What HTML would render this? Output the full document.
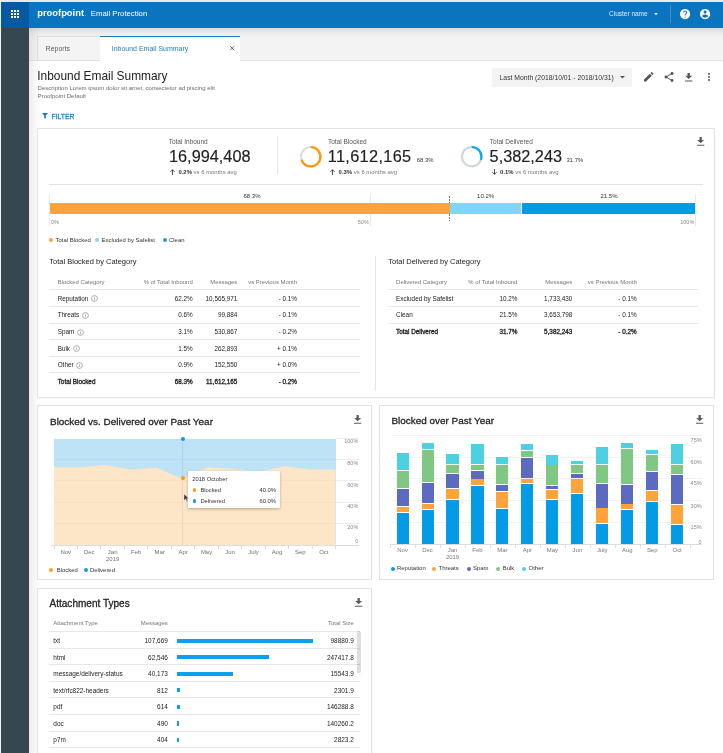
<!DOCTYPE html><html><head><meta charset="utf-8"><style>
*{margin:0;padding:0;box-sizing:border-box}
html,body{width:723px;height:753px;overflow:hidden;background:#fff}
body{position:relative;font-family:"Liberation Sans",sans-serif;}
.b{position:absolute}
.t{position:absolute;white-space:nowrap}
svg{position:absolute;overflow:visible}
</style></head><body><div id="root" style="position:absolute;left:0;top:0;width:723px;height:753px;will-change:transform"><div class="b" style="left:0px;top:0px;width:723px;height:753px;background:#ffffff;"></div>
<div class="b" style="left:0px;top:0px;width:723px;height:2px;background:#ebe9e6;"></div>
<div class="b" style="left:0px;top:0px;width:1px;height:753px;background:#f2f2f2;"></div>
<div class="b" style="left:1px;top:2px;width:722px;height:26px;background:#0a74be;"></div>
<div class="b" style="left:1px;top:2px;width:28px;height:26px;background:#0659a3;"></div>
<div class="b" style="left:11px;top:10px;width:2px;height:2px;background:#ffffff;"></div>
<div class="b" style="left:11px;top:13px;width:2px;height:2px;background:#ffffff;"></div>
<div class="b" style="left:11px;top:16px;width:2px;height:2px;background:#ffffff;"></div>
<div class="b" style="left:14px;top:10px;width:2px;height:2px;background:#ffffff;"></div>
<div class="b" style="left:14px;top:13px;width:2px;height:2px;background:#ffffff;"></div>
<div class="b" style="left:14px;top:16px;width:2px;height:2px;background:#ffffff;"></div>
<div class="b" style="left:17px;top:10px;width:2px;height:2px;background:#ffffff;"></div>
<div class="b" style="left:17px;top:13px;width:2px;height:2px;background:#ffffff;"></div>
<div class="b" style="left:17px;top:16px;width:2px;height:2px;background:#ffffff;"></div>
<div class="t" style="left:37.2px;top:3.20px;font-size:9.4px;color:#ffffff;font-weight:700;line-height:20px;letter-spacing:0px">proofpoint</div>
<div class="b" style="left:85px;top:15.3px;width:0.8px;height:0.8px;background:#6aa8da"></div>
<div class="t" style="left:90.8px;top:4.00px;font-size:7.76px;color:#ffffff;font-weight:400;line-height:20px;">Email Protection</div>
<div class="t" style="left:609px;top:3.50px;font-size:6.5px;color:#e3eef8;font-weight:400;line-height:20px;">Cluster name</div>
<svg style="left:653.8px;top:12.6px" width="4" height="2.4"><path d="M0 0 L4 0 L2 2.3 Z" fill="#d6e6f4"/></svg>
<div class="b" style="left:670px;top:5px;width:1px;height:17.6px;background:#3d8fcb;"></div>
<svg style="left:678.8px;top:7.9px" width="12.2" height="12.2" viewBox="0 0 24 24"><path fill="#fff" d="M12 2C6.48 2 2 6.48 2 12s4.48 10 10 10 10-4.48 10-10S17.52 2 12 2zm1 17h-2v-2h2v2zm2.07-7.75l-.9.92C13.45 12.9 13 13.5 13 15h-2v-.5c0-1.1.45-2.1 1.17-2.83l1.24-1.26c.37-.36.59-.86.59-1.41 0-1.1-.9-2-2-2s-2 .9-2 2H8c0-2.21 1.79-4 4-4s4 1.79 4 4c0 .88-.36 1.68-.93 2.25z"/></svg>
<svg style="left:698.8px;top:7.9px" width="12.2" height="12.2" viewBox="0 0 24 24"><path fill="#fff" d="M12 2C6.48 2 2 6.48 2 12s4.48 10 10 10 10-4.48 10-10S17.52 2 12 2zm0 3c1.66 0 3 1.34 3 3s-1.34 3-3 3-3-1.34-3-3 1.34-3 3-3zm0 14.2c-2.5 0-4.71-1.28-6-3.22.03-1.99 4-3.08 6-3.08 1.99 0 5.97 1.09 6 3.08-1.29 1.94-3.5 3.22-6 3.22z"/></svg>
<div class="b" style="left:1px;top:28px;width:28px;height:725px;background:#37474f;"></div>
<div class="b" style="left:29px;top:28px;width:694px;height:32px;background:#f3f3f3;"></div>
<div class="b" style="left:29px;top:28px;width:694px;height:10px;background:linear-gradient(to bottom, rgba(0,0,0,0.10), rgba(0,0,0,0.035) 45%, rgba(0,0,0,0));"></div>
<div class="b" style="left:29px;top:60px;width:8px;height:1px;background:#e4e4e4;"></div>
<div class="b" style="left:240px;top:60px;width:483px;height:1px;background:#e4e4e4;"></div>
<div class="b" style="left:37px;top:36px;width:63px;height:25px;background:#f4f4f4;border:1px solid #dedede;border-right:none"></div>
<div class="t" style="left:45.6px;top:38.80px;font-size:7px;color:#5f5f5f;font-weight:400;line-height:20px;">Reports</div>
<div class="b" style="left:100px;top:36px;width:140px;height:25px;background:#ffffff;border-top:1.5px solid #1a7bc4"></div>
<div class="t" style="left:111.7px;top:38.80px;font-size:7px;color:#1f7cc2;font-weight:400;line-height:20px;">Inbound Email Summary</div>
<svg style="left:229.9px;top:45.9px" width="4.4" height="4.4"><path d="M0.2 0.2 L4.2 4.2 M4.2 0.2 L0.2 4.2" stroke="#5a5a5a" stroke-width="0.85"/></svg>
<div class="b" style="left:29px;top:28px;width:13px;height:725px;background:linear-gradient(to right, rgba(0,0,0,0.075), rgba(0,0,0,0.02) 60%, rgba(0,0,0,0));"></div>
<div class="t" style="left:37.3px;top:66.40px;font-size:11.9px;color:#212121;font-weight:400;line-height:20px;">Inbound Email Summary</div>
<div class="t" style="left:37.6px;top:77.90px;font-size:6.04px;color:#6b6b6b;font-weight:400;line-height:20px;">Description Lorem ipsum dolor sit amet, consectetur ad piscing elit</div>
<div class="t" style="left:37.6px;top:85.80px;font-size:6.04px;color:#6b6b6b;font-weight:400;line-height:20px;">Proofpoint Default</div>
<svg style="left:42px;top:112.9px" width="6" height="5.8" viewBox="0 0 6 5.8"><path d="M0 0 H6 L3.8 2.6 V5.8 L2.2 5.0 V2.6 Z" fill="#1a76c0"/></svg>
<div class="t" style="left:51.6px;top:106.50px;font-size:6.75px;color:#2a83c6;font-weight:400;line-height:20px;-webkit-text-stroke:0.3px #2a83c6">FILTER</div>
<div class="b" style="left:492px;top:68px;width:140px;height:19px;background:#f3f3f3;"></div>
<div class="t" style="left:499.6px;top:67.80px;font-size:6.8px;color:#333;font-weight:400;line-height:20px;">Last Month (2018/10/01 - 2018/10/31)</div>
<svg style="left:619.5px;top:75.8px" width="5" height="3"><path d="M0 0 L5 0 L2.5 2.6 Z" fill="#555"/></svg>
<svg style="left:643.8px;top:72.4px" width="9.5" height="9.5" viewBox="3 3 18 18"><path fill="#555" d="M3 17.25V21h3.75L17.81 9.94l-3.75-3.75L3 17.25zM20.71 7.04c.39-.39.39-1.02 0-1.41l-2.34-2.34c-.39-.39-1.02-.39-1.41 0l-1.83 1.83 3.75 3.75 1.83-1.83z"/></svg>
<svg style="left:663.9px;top:72.4px" width="10" height="10" viewBox="3 2 18 20"><path fill="#555" d="M18 16.08c-.76 0-1.44.3-1.96.77L8.91 12.7c.05-.23.09-.46.09-.7s-.04-.47-.09-.7l7.05-4.11c.54.5 1.25.81 2.04.81 1.66 0 3-1.34 3-3s-1.34-3-3-3-3 1.34-3 3c0 .24.04.47.09.7L8.04 9.81C7.5 9.31 6.79 9 6 9c-1.66 0-3 1.34-3 3s1.34 3 3 3c.79 0 1.5-.31 2.04-.81l7.12 4.16c-.05.21-.08.43-.08.65 0 1.61 1.31 2.92 2.92 2.92 1.61 0 2.92-1.31 2.92-2.92s-1.31-2.92-2.92-2.92z"/></svg>
<svg style="left:685.0px;top:72.8px" width="7.4" height="8.5" viewBox="0 0 7.3 8.8" preserveAspectRatio="none"><path fill="#555" d="M2.5 0 H4.8 V2.9 H7.1 L3.65 6.2 L0.2 2.9 H2.5 Z M0 7.7 H7.3 V8.8 H0 Z"/></svg>
<div class="b" style="left:707.8px;top:73.0px;width:2.0px;height:2.0px;background:#555;border-radius:50%"></div>
<div class="b" style="left:707.8px;top:76.2px;width:2.0px;height:2.0px;background:#555;border-radius:50%"></div>
<div class="b" style="left:707.8px;top:79.4px;width:2.0px;height:2.0px;background:#555;border-radius:50%"></div>
<div class="b" style="left:37px;top:128px;width:678px;height:270px;border:1px solid #e2e2e2;box-shadow:0 0 1px rgba(0,0,0,0.06);background:#fff"></div>
<svg style="left:697.0px;top:137.2px" width="7.3" height="8.8" viewBox="0 0 7.3 8.8" preserveAspectRatio="none"><path fill="#5a5a5a" d="M2.5 0 H4.8 V2.9 H7.1 L3.65 6.2 L0.2 2.9 H2.5 Z M0 7.7 H7.3 V8.8 H0 Z"/></svg>
<div class="t" style="left:168.7px;top:131.50px;font-size:6.5px;color:#555;font-weight:400;line-height:20px;">Total Inbound</div>
<div class="t" style="left:169.0px;top:146.20px;font-size:16.3px;color:#212121;font-weight:400;line-height:20px;-webkit-text-stroke:0.15px #212121">16,994,408</div>
<svg style="left:169.8px;top:169px" width="5" height="6"><path d="M2.5 6 V0.7 M0.4 2.8 L2.5 0.7 L4.6 2.8" fill="none" stroke="#333" stroke-width="0.85"/></svg>
<div class="t" style="left:178.4px;top:162px;line-height:20px;font-size:5.95px;color:#777"><b style="color:#333">0.2%</b> vs 6 months avg</div>
<div class="b" style="left:276.5px;top:136px;width:1.0px;height:38px;background:#e6e6e6;"></div>
<svg style="left:299.1px;top:145.3px" width="23.4" height="23.4"><circle cx="11.7" cy="11.7" r="9.7" fill="none" stroke="#d9e2e7" stroke-width="2.2"/><circle cx="11.7" cy="11.7" r="9.7" fill="none" stroke="#ff9800" stroke-width="2.2" stroke-dasharray="42.36 60.95" transform="rotate(-90 11.7 11.7)"/></svg>
<div class="t" style="left:328px;top:131.50px;font-size:6.5px;color:#555;font-weight:400;line-height:20px;">Total Blocked</div>
<div class="t" style="left:327.7px;top:146.20px;font-size:16.3px;color:#212121;font-weight:400;line-height:20px;letter-spacing:0.35px;-webkit-text-stroke:0.15px #212121">11,612,165</div>
<div class="t" style="left:416.8px;top:150.00px;font-size:5.9px;color:#333;font-weight:400;line-height:20px;">68.3%</div>
<svg style="left:330px;top:169px" width="5" height="6"><path d="M2.5 6 V0.7 M0.4 2.8 L2.5 0.7 L4.6 2.8" fill="none" stroke="#333" stroke-width="0.85"/></svg>
<div class="t" style="left:338.6px;top:162px;line-height:20px;font-size:5.95px;color:#777"><b style="color:#333">0.3%</b> vs 6 months avg</div>
<svg style="left:460.2px;top:145.20000000000002px" width="23.4" height="23.4"><circle cx="11.7" cy="11.7" r="9.7" fill="none" stroke="#cfd8dc" stroke-width="2.2"/><circle cx="11.7" cy="11.7" r="9.7" fill="none" stroke="#03a9f4" stroke-width="2.2" stroke-dasharray="18.28 60.95" transform="rotate(-90 11.7 11.7)"/></svg>
<div class="t" style="left:489.8px;top:131.50px;font-size:6.5px;color:#555;font-weight:400;line-height:20px;">Total Delivered</div>
<div class="t" style="left:489.6px;top:146.20px;font-size:16.3px;color:#212121;font-weight:400;line-height:20px;-webkit-text-stroke:0.15px #212121">5,382,243</div>
<div class="t" style="left:566.6px;top:150.00px;font-size:5.9px;color:#333;font-weight:400;line-height:20px;">31.7%</div>
<svg style="left:491.5px;top:169px" width="5" height="6"><path d="M2.5 0 V5.3 M0.4 3.2 L2.5 5.3 L4.6 3.2" fill="none" stroke="#333" stroke-width="0.85"/></svg>
<div class="t" style="left:500.1px;top:162px;line-height:20px;font-size:5.95px;color:#777"><b style="color:#333">0.1%</b> vs 6 months avg</div>
<div class="b" style="left:49px;top:184px;width:654px;height:1px;background:#e3e3e3;"></div>
<div class="b" style="left:49.0px;top:195px;width:1.0px;height:30.5px;background:#e8e8e8;"></div>
<div class="b" style="left:369.9px;top:195px;width:1.0px;height:30.5px;background:#e8e8e8;"></div>
<div class="b" style="left:695.0px;top:195px;width:1.0px;height:30.5px;background:#e8e8e8;"></div>
<div class="b" style="left:449px;top:196px;width:1px;height:26.5px;background:repeating-linear-gradient(to bottom,#777 0,#777 1.5px,transparent 1.5px,transparent 3px)"></div>
<div class="b" style="left:49.5px;top:202.7px;width:400.0px;height:11.800000000000011px;background:#fca23b;"></div>
<div class="b" style="left:449.5px;top:202.7px;width:71.20000000000005px;height:11.800000000000011px;background:#81d4fa;"></div>
<div class="b" style="left:521.7px;top:202.7px;width:173.79999999999995px;height:11.800000000000011px;background:#039be5;"></div>
<div class="t" style="left:252px;transform:translateX(-50%);top:186.40px;font-size:6px;color:#333;font-weight:400;line-height:20px;">68.3%</div>
<div class="t" style="left:485.6px;transform:translateX(-50%);top:186.40px;font-size:6px;color:#333;font-weight:400;line-height:20px;">10.2%</div>
<div class="t" style="left:609px;transform:translateX(-50%);top:186.40px;font-size:6px;color:#333;font-weight:400;line-height:20px;">21.5%</div>
<div class="t" style="left:51px;top:211.70px;font-size:5.5px;color:#888;font-weight:400;line-height:20px;">0%</div>
<div class="t" style="right:354.2px;top:211.70px;font-size:5.5px;color:#888;font-weight:400;line-height:20px;">50%</div>
<div class="t" style="right:28.700000000000045px;top:211.70px;font-size:5.5px;color:#888;font-weight:400;line-height:20px;">100%</div>
<div class="b" style="left:49px;top:237.8px;width:4px;height:4px;border-radius:50%;background:#fca23b"></div>
<div class="t" style="left:55.6px;top:230.00px;font-size:5.95px;color:#333;font-weight:400;line-height:20px;">Total Blocked</div>
<div class="b" style="left:95px;top:237.8px;width:4px;height:4px;border-radius:50%;background:#81d4fa"></div>
<div class="t" style="left:101.5px;top:230.00px;font-size:5.95px;color:#333;font-weight:400;line-height:20px;">Excluded by Safelist</div>
<div class="b" style="left:162.5px;top:237.6px;width:4px;height:4px;border-radius:50%;background:#1a9be6"></div>
<div class="t" style="left:169px;top:230.00px;font-size:5.95px;color:#333;font-weight:400;line-height:20px;">Clean</div>
<div class="b" style="left:375px;top:256px;width:1px;height:134.60000000000002px;background:#e6e6e6;"></div>
<div class="t" style="left:49.3px;top:251.60px;font-size:7.5px;color:#212121;font-weight:400;line-height:20px;">Total Blocked by Category</div>
<div class="t" style="left:57.7px;top:272.00px;font-size:5.95px;color:#757575;font-weight:400;line-height:20px;">Blocked Category</div>
<div class="t" style="right:530.3px;top:272.00px;font-size:5.95px;color:#757575;font-weight:400;line-height:20px;">% of Total Inbound</div>
<div class="t" style="right:485.7px;top:272.00px;font-size:5.95px;color:#757575;font-weight:400;line-height:20px;">Messages</div>
<div class="t" style="right:426.0px;top:272.00px;font-size:5.95px;color:#757575;font-weight:400;line-height:20px;">vs Previous Month</div>
<div class="b" style="left:49px;top:289px;width:311px;height:1px;background:#e8e8e8;"></div>
<div class="t" style="left:57.7px;top:288.70px;font-size:6.35px;color:#212121;font-weight:400;line-height:20px;">Reputation<svg style="position:relative;display:inline-block;vertical-align:-1.6px;margin-left:2.7px" width="7" height="7" viewBox="0 0 7 7"><circle cx="3.5" cy="3.5" r="2.95" fill="none" stroke="#858585" stroke-width="0.65"/><rect x="3.18" y="2.9" width="0.64" height="2.2" fill="#858585"/><rect x="3.18" y="1.8" width="0.64" height="0.64" fill="#858585"/></svg></div>
<div class="t" style="right:530.3px;top:288.70px;font-size:6.35px;color:#212121;font-weight:400;line-height:20px;">62.2%</div>
<div class="t" style="right:485.7px;top:288.70px;font-size:6.35px;color:#212121;font-weight:400;line-height:20px;">10,565,971</div>
<div class="t" style="right:426.0px;top:288.70px;font-size:6.35px;color:#212121;font-weight:400;line-height:20px;">- 0.1%</div>
<div class="b" style="left:49px;top:306px;width:311px;height:1px;background:#e8e8e8;"></div>
<div class="t" style="left:57.7px;top:305.40px;font-size:6.35px;color:#212121;font-weight:400;line-height:20px;">Threats<svg style="position:relative;display:inline-block;vertical-align:-1.6px;margin-left:2.7px" width="7" height="7" viewBox="0 0 7 7"><circle cx="3.5" cy="3.5" r="2.95" fill="none" stroke="#858585" stroke-width="0.65"/><rect x="3.18" y="2.9" width="0.64" height="2.2" fill="#858585"/><rect x="3.18" y="1.8" width="0.64" height="0.64" fill="#858585"/></svg></div>
<div class="t" style="right:530.3px;top:305.40px;font-size:6.35px;color:#212121;font-weight:400;line-height:20px;">0.6%</div>
<div class="t" style="right:485.7px;top:305.40px;font-size:6.35px;color:#212121;font-weight:400;line-height:20px;">99,884</div>
<div class="t" style="right:426.0px;top:305.40px;font-size:6.35px;color:#212121;font-weight:400;line-height:20px;">- 0.1%</div>
<div class="b" style="left:49px;top:323px;width:311px;height:1px;background:#e8e8e8;"></div>
<div class="t" style="left:57.7px;top:322.00px;font-size:6.35px;color:#212121;font-weight:400;line-height:20px;">Spam<svg style="position:relative;display:inline-block;vertical-align:-1.6px;margin-left:2.7px" width="7" height="7" viewBox="0 0 7 7"><circle cx="3.5" cy="3.5" r="2.95" fill="none" stroke="#858585" stroke-width="0.65"/><rect x="3.18" y="2.9" width="0.64" height="2.2" fill="#858585"/><rect x="3.18" y="1.8" width="0.64" height="0.64" fill="#858585"/></svg></div>
<div class="t" style="right:530.3px;top:322.00px;font-size:6.35px;color:#212121;font-weight:400;line-height:20px;">3.1%</div>
<div class="t" style="right:485.7px;top:322.00px;font-size:6.35px;color:#212121;font-weight:400;line-height:20px;">530,867</div>
<div class="t" style="right:426.0px;top:322.00px;font-size:6.35px;color:#212121;font-weight:400;line-height:20px;">- 0.2%</div>
<div class="b" style="left:49px;top:339px;width:311px;height:1px;background:#e8e8e8;"></div>
<div class="t" style="left:57.7px;top:338.60px;font-size:6.35px;color:#212121;font-weight:400;line-height:20px;">Bulk<svg style="position:relative;display:inline-block;vertical-align:-1.6px;margin-left:2.7px" width="7" height="7" viewBox="0 0 7 7"><circle cx="3.5" cy="3.5" r="2.95" fill="none" stroke="#858585" stroke-width="0.65"/><rect x="3.18" y="2.9" width="0.64" height="2.2" fill="#858585"/><rect x="3.18" y="1.8" width="0.64" height="0.64" fill="#858585"/></svg></div>
<div class="t" style="right:530.3px;top:338.60px;font-size:6.35px;color:#212121;font-weight:400;line-height:20px;">1.5%</div>
<div class="t" style="right:485.7px;top:338.60px;font-size:6.35px;color:#212121;font-weight:400;line-height:20px;">262,893</div>
<div class="t" style="right:426.0px;top:338.60px;font-size:6.35px;color:#212121;font-weight:400;line-height:20px;">+ 0.1%</div>
<div class="b" style="left:49px;top:356px;width:311px;height:1px;background:#e8e8e8;"></div>
<div class="t" style="left:57.7px;top:355.20px;font-size:6.35px;color:#212121;font-weight:400;line-height:20px;">Other<svg style="position:relative;display:inline-block;vertical-align:-1.6px;margin-left:2.7px" width="7" height="7" viewBox="0 0 7 7"><circle cx="3.5" cy="3.5" r="2.95" fill="none" stroke="#858585" stroke-width="0.65"/><rect x="3.18" y="2.9" width="0.64" height="2.2" fill="#858585"/><rect x="3.18" y="1.8" width="0.64" height="0.64" fill="#858585"/></svg></div>
<div class="t" style="right:530.3px;top:355.20px;font-size:6.35px;color:#212121;font-weight:400;line-height:20px;">0.9%</div>
<div class="t" style="right:485.7px;top:355.20px;font-size:6.35px;color:#212121;font-weight:400;line-height:20px;">152,550</div>
<div class="t" style="right:426.0px;top:355.20px;font-size:6.35px;color:#212121;font-weight:400;line-height:20px;">+ 0.0%</div>
<div class="b" style="left:49px;top:372px;width:311px;height:1px;background:#e8e8e8;"></div>
<div class="t" style="left:57.7px;top:371.80px;font-size:6.35px;color:#212121;font-weight:400;line-height:20px;-webkit-text-stroke:0.3px #212121">Total Blocked</div>
<div class="t" style="right:530.3px;top:371.80px;font-size:6.35px;color:#212121;font-weight:400;line-height:20px;-webkit-text-stroke:0.3px #212121">68.3%</div>
<div class="t" style="right:485.7px;top:371.80px;font-size:6.35px;color:#212121;font-weight:400;line-height:20px;-webkit-text-stroke:0.3px #212121">11,612,165</div>
<div class="t" style="right:426.0px;top:371.80px;font-size:6.35px;color:#212121;font-weight:400;line-height:20px;-webkit-text-stroke:0.3px #212121">- 0.2%</div>
<div class="t" style="left:388.3px;top:251.60px;font-size:7.5px;color:#212121;font-weight:400;line-height:20px;">Total Delivered by Category</div>
<div class="t" style="left:396.1px;top:272.00px;font-size:5.95px;color:#757575;font-weight:400;line-height:20px;">Delivered Category</div>
<div class="t" style="right:205.60000000000002px;top:272.00px;font-size:5.95px;color:#757575;font-weight:400;line-height:20px;">% of Total Inbound</div>
<div class="t" style="right:150.70000000000005px;top:272.00px;font-size:5.95px;color:#757575;font-weight:400;line-height:20px;">Messages</div>
<div class="t" style="right:86.29999999999995px;top:272.00px;font-size:5.95px;color:#757575;font-weight:400;line-height:20px;">vs Previous Month</div>
<div class="b" style="left:388px;top:289px;width:310px;height:1px;background:#e8e8e8;"></div>
<div class="t" style="left:396.1px;top:288.70px;font-size:6.35px;color:#212121;font-weight:400;line-height:20px;">Excluded by Safelist</div>
<div class="t" style="right:205.60000000000002px;top:288.70px;font-size:6.35px;color:#212121;font-weight:400;line-height:20px;">10.2%</div>
<div class="t" style="right:150.70000000000005px;top:288.70px;font-size:6.35px;color:#212121;font-weight:400;line-height:20px;">1,733,430</div>
<div class="t" style="right:86.29999999999995px;top:288.70px;font-size:6.35px;color:#212121;font-weight:400;line-height:20px;">- 0.1%</div>
<div class="b" style="left:388px;top:306px;width:310px;height:1px;background:#e8e8e8;"></div>
<div class="t" style="left:396.1px;top:305.40px;font-size:6.35px;color:#212121;font-weight:400;line-height:20px;">Clean</div>
<div class="t" style="right:205.60000000000002px;top:305.40px;font-size:6.35px;color:#212121;font-weight:400;line-height:20px;">21.5%</div>
<div class="t" style="right:150.70000000000005px;top:305.40px;font-size:6.35px;color:#212121;font-weight:400;line-height:20px;">3,653,798</div>
<div class="t" style="right:86.29999999999995px;top:305.40px;font-size:6.35px;color:#212121;font-weight:400;line-height:20px;">- 0.1%</div>
<div class="b" style="left:388px;top:323px;width:310px;height:1px;background:#e8e8e8;"></div>
<div class="t" style="left:396.1px;top:322.00px;font-size:6.35px;color:#212121;font-weight:400;line-height:20px;-webkit-text-stroke:0.3px #212121">Total Delivered</div>
<div class="t" style="right:205.60000000000002px;top:322.00px;font-size:6.35px;color:#212121;font-weight:400;line-height:20px;-webkit-text-stroke:0.3px #212121">31.7%</div>
<div class="t" style="right:150.70000000000005px;top:322.00px;font-size:6.35px;color:#212121;font-weight:400;line-height:20px;-webkit-text-stroke:0.3px #212121">5,382,243</div>
<div class="t" style="right:86.29999999999995px;top:322.00px;font-size:6.35px;color:#212121;font-weight:400;line-height:20px;-webkit-text-stroke:0.3px #212121">- 0.2%</div>
<div class="b" style="left:37px;top:405px;width:335px;height:175px;border:1px solid #e2e2e2;box-shadow:0 0 1px rgba(0,0,0,0.06);background:#fff"></div>
<div class="t" style="left:50px;top:411.80px;font-size:9.95px;color:#212121;font-weight:400;line-height:20px;-webkit-text-stroke:0.28px #212121">Blocked vs. Delivered over Past Year</div>
<svg style="left:354.2px;top:415.0px" width="7.3" height="8.8" viewBox="0 0 7.3 8.8" preserveAspectRatio="none"><path fill="#5a5a5a" d="M2.5 0 H4.8 V2.9 H7.1 L3.65 6.2 L0.2 2.9 H2.5 Z M0 7.7 H7.3 V8.8 H0 Z"/></svg>
<div class="b" style="left:54px;top:438.6px;width:281.6px;height:106.89999999999998px;background:#bee3f7;"></div>
<svg style="left:54px;top:438.6px" width="281.6" height="106.89999999999998"><polygon points="0.00,28.20 25.60,28.20 51.20,26.10 76.80,30.70 102.40,28.80 128.00,39.80 153.60,28.30 179.20,30.10 204.80,32.80 230.40,27.20 256.00,30.50 281.60,30.50 281.60,106.90 0,106.90" fill="#fde5c8"/></svg>
<div class="b" style="left:54px;top:438px;width:281.6px;height:1px;background:rgba(0,0,0,0.025);"></div>
<div class="b" style="left:335.6px;top:438px;width:23.399999999999977px;height:1px;background:#ededed;"></div>
<div class="b" style="left:54px;top:459px;width:281.6px;height:1px;background:rgba(0,0,0,0.025);"></div>
<div class="b" style="left:335.6px;top:459px;width:23.399999999999977px;height:1px;background:#ededed;"></div>
<div class="b" style="left:54px;top:480px;width:281.6px;height:1px;background:rgba(0,0,0,0.025);"></div>
<div class="b" style="left:335.6px;top:480px;width:23.399999999999977px;height:1px;background:#ededed;"></div>
<div class="b" style="left:54px;top:502px;width:281.6px;height:1px;background:rgba(0,0,0,0.025);"></div>
<div class="b" style="left:335.6px;top:502px;width:23.399999999999977px;height:1px;background:#ededed;"></div>
<div class="b" style="left:54px;top:523px;width:281.6px;height:1px;background:rgba(0,0,0,0.025);"></div>
<div class="b" style="left:335.6px;top:523px;width:23.399999999999977px;height:1px;background:#ededed;"></div>
<div class="b" style="left:50.5px;top:545px;width:308.5px;height:1px;background:#dcdcdc;"></div>
<div class="b" style="left:182.4px;top:438.6px;width:1.0px;height:106.89999999999998px;background:rgba(0,0,0,0.07);"></div>
<div class="b" style="left:180.6px;top:437.0px;width:4px;height:4px;border-radius:50%;background:#1a96e0"></div>
<div class="b" style="left:180.6px;top:476.0px;width:4px;height:4px;border-radius:50%;background:#fb9a17"></div>
<div class="t" style="right:364.7px;top:431.00px;font-size:5.5px;color:#888;font-weight:400;line-height:20px;">100%</div>
<div class="t" style="right:364.7px;top:453.20px;font-size:5.5px;color:#888;font-weight:400;line-height:20px;">80%</div>
<div class="t" style="right:364.7px;top:474.50px;font-size:5.5px;color:#888;font-weight:400;line-height:20px;">60%</div>
<div class="t" style="right:364.7px;top:496.00px;font-size:5.5px;color:#888;font-weight:400;line-height:20px;">40%</div>
<div class="t" style="right:364.7px;top:517.40px;font-size:5.5px;color:#888;font-weight:400;line-height:20px;">20%</div>
<div class="t" style="right:364.7px;top:531.20px;font-size:5.5px;color:#888;font-weight:400;line-height:20px;">0</div>
<div class="b" style="left:53.5px;top:545px;width:1.0px;height:4px;background:#dcdcdc;"></div>
<div class="b" style="left:76.96666666666667px;top:545px;width:1.0px;height:4px;background:#dcdcdc;"></div>
<div class="b" style="left:100.43333333333334px;top:545px;width:1.0px;height:4px;background:#dcdcdc;"></div>
<div class="b" style="left:123.9px;top:545px;width:1.0px;height:4px;background:#dcdcdc;"></div>
<div class="b" style="left:147.36666666666667px;top:545px;width:1.0px;height:4px;background:#dcdcdc;"></div>
<div class="b" style="left:170.83333333333334px;top:545px;width:1.0px;height:4px;background:#dcdcdc;"></div>
<div class="b" style="left:194.3px;top:545px;width:1.0px;height:4px;background:#dcdcdc;"></div>
<div class="b" style="left:217.76666666666668px;top:545px;width:1.0px;height:4px;background:#dcdcdc;"></div>
<div class="b" style="left:241.23333333333335px;top:545px;width:1.0px;height:4px;background:#dcdcdc;"></div>
<div class="b" style="left:264.70000000000005px;top:545px;width:1.0px;height:4px;background:#dcdcdc;"></div>
<div class="b" style="left:288.1666666666667px;top:545px;width:1.0px;height:4px;background:#dcdcdc;"></div>
<div class="b" style="left:311.6333333333333px;top:545px;width:1.0px;height:4px;background:#dcdcdc;"></div>
<div class="b" style="left:335.1px;top:545px;width:1.0px;height:4px;background:#dcdcdc;"></div>
<div class="t" style="left:65.73333333333333px;transform:translateX(-50%);top:541.50px;font-size:5.95px;color:#6f6f6f;font-weight:400;line-height:20px;">Nov</div>
<div class="t" style="left:89.2px;transform:translateX(-50%);top:541.50px;font-size:5.95px;color:#6f6f6f;font-weight:400;line-height:20px;">Dec</div>
<div class="t" style="left:112.66666666666667px;transform:translateX(-50%);top:541.50px;font-size:5.95px;color:#6f6f6f;font-weight:400;line-height:20px;">Jan</div>
<div class="t" style="left:136.13333333333333px;transform:translateX(-50%);top:541.50px;font-size:5.95px;color:#6f6f6f;font-weight:400;line-height:20px;">Feb</div>
<div class="t" style="left:159.60000000000002px;transform:translateX(-50%);top:541.50px;font-size:5.95px;color:#6f6f6f;font-weight:400;line-height:20px;">Mar</div>
<div class="t" style="left:183.06666666666666px;transform:translateX(-50%);top:541.50px;font-size:5.95px;color:#6f6f6f;font-weight:400;line-height:20px;">Apr</div>
<div class="t" style="left:206.53333333333336px;transform:translateX(-50%);top:541.50px;font-size:5.95px;color:#6f6f6f;font-weight:400;line-height:20px;">May</div>
<div class="t" style="left:230.0px;transform:translateX(-50%);top:541.50px;font-size:5.95px;color:#6f6f6f;font-weight:400;line-height:20px;">Jun</div>
<div class="t" style="left:253.4666666666667px;transform:translateX(-50%);top:541.50px;font-size:5.95px;color:#6f6f6f;font-weight:400;line-height:20px;">July</div>
<div class="t" style="left:276.93333333333334px;transform:translateX(-50%);top:541.50px;font-size:5.95px;color:#6f6f6f;font-weight:400;line-height:20px;">Aug</div>
<div class="t" style="left:300.40000000000003px;transform:translateX(-50%);top:541.50px;font-size:5.95px;color:#6f6f6f;font-weight:400;line-height:20px;">Sep</div>
<div class="t" style="left:323.8666666666667px;transform:translateX(-50%);top:541.50px;font-size:5.95px;color:#6f6f6f;font-weight:400;line-height:20px;">Oct</div>
<div class="t" style="left:112.66666666666667px;transform:translateX(-50%);top:548.70px;font-size:5.95px;color:#6f6f6f;font-weight:400;line-height:20px;">2019</div>
<div class="b" style="left:188px;top:471px;width:92px;height:37.3px;background:#fff;box-shadow:0 1px 3px rgba(0,0,0,0.28);border-radius:1px"></div>
<div class="t" style="left:192.2px;top:469.20px;font-size:5.8px;color:#333;font-weight:400;line-height:20px;">2018 October</div>
<div class="b" style="left:192.6px;top:488.0px;width:3.6px;height:3.6px;border-radius:50%;background:#fb9a17"></div>
<div class="t" style="left:200.4px;top:480.00px;font-size:5.8px;color:#333;font-weight:400;line-height:20px;">Blocked</div>
<div class="t" style="right:447px;top:480.00px;font-size:5.8px;color:#333;font-weight:400;line-height:20px;">40.0%</div>
<div class="b" style="left:192.6px;top:499.0px;width:3.6px;height:3.6px;border-radius:50%;background:#1a96e0"></div>
<div class="t" style="left:200.4px;top:491.00px;font-size:5.8px;color:#333;font-weight:400;line-height:20px;">Delivered</div>
<div class="t" style="right:447px;top:491.00px;font-size:5.8px;color:#333;font-weight:400;line-height:20px;">60.0%</div>
<svg style="left:183.6px;top:494px" width="6" height="8"><path d="M0 0 L0 6.5 L1.6 5 L2.8 7.5 L3.8 7 L2.7 4.6 L4.8 4.6 Z" fill="#333" stroke="#fff" stroke-width="0.4"/></svg>
<div class="b" style="left:49.1px;top:567.6px;width:4px;height:4px;border-radius:50%;background:#fba21a"></div>
<div class="t" style="left:56.7px;top:559.80px;font-size:5.95px;color:#333;font-weight:400;line-height:20px;">Blocked</div>
<div class="b" style="left:83.8px;top:567.6px;width:4px;height:4px;border-radius:50%;background:#1a96e0"></div>
<div class="t" style="left:89.9px;top:559.80px;font-size:5.95px;color:#333;font-weight:400;line-height:20px;">Delivered</div>
<div class="b" style="left:379px;top:405px;width:335px;height:175px;border:1px solid #e2e2e2;box-shadow:0 0 1px rgba(0,0,0,0.06);background:#fff"></div>
<div class="t" style="left:391.4px;top:411.00px;font-size:9.95px;color:#212121;font-weight:400;line-height:20px;-webkit-text-stroke:0.28px #212121">Blocked over Past Year</div>
<svg style="left:696.2px;top:415.0px" width="7.3" height="8.8" viewBox="0 0 7.3 8.8" preserveAspectRatio="none"><path fill="#5a5a5a" d="M2.5 0 H4.8 V2.9 H7.1 L3.65 6.2 L0.2 2.9 H2.5 Z M0 7.7 H7.3 V8.8 H0 Z"/></svg>
<div class="b" style="left:390.5px;top:435px;width:311.5px;height:1px;background:rgba(0,0,0,0.05);"></div>
<div class="b" style="left:390.5px;top:457px;width:311.5px;height:1px;background:rgba(0,0,0,0.05);"></div>
<div class="b" style="left:390.5px;top:478px;width:311.5px;height:1px;background:rgba(0,0,0,0.05);"></div>
<div class="b" style="left:390.5px;top:500px;width:311.5px;height:1px;background:rgba(0,0,0,0.05);"></div>
<div class="b" style="left:390.5px;top:522px;width:311.5px;height:1px;background:rgba(0,0,0,0.05);"></div>
<div class="b" style="left:390.5px;top:544px;width:311.5px;height:1px;background:#dcdcdc;"></div>
<div class="t" style="right:21.399999999999977px;top:430.00px;font-size:5.5px;color:#888;font-weight:400;line-height:20px;">75%</div>
<div class="t" style="right:21.399999999999977px;top:452.20px;font-size:5.5px;color:#888;font-weight:400;line-height:20px;">60%</div>
<div class="t" style="right:21.399999999999977px;top:472.80px;font-size:5.5px;color:#888;font-weight:400;line-height:20px;">45%</div>
<div class="t" style="right:21.399999999999977px;top:495.50px;font-size:5.5px;color:#888;font-weight:400;line-height:20px;">30%</div>
<div class="t" style="right:21.399999999999977px;top:517.00px;font-size:5.5px;color:#888;font-weight:400;line-height:20px;">15%</div>
<div class="t" style="right:21.399999999999977px;top:531.80px;font-size:5.5px;color:#888;font-weight:400;line-height:20px;">0</div>
<div class="b" style="left:396.55px;top:452.8px;width:12.099999999999966px;height:17.05000000000001px;background:#4dd0e1;"></div>
<div class="b" style="left:396.55px;top:470.75px;width:12.099999999999966px;height:16.899999999999977px;background:#81c784;"></div>
<div class="b" style="left:396.55px;top:488.55px;width:12.099999999999966px;height:17.399999999999977px;background:#5c6bc0;"></div>
<div class="b" style="left:396.55px;top:506.85px;width:12.099999999999966px;height:5.0px;background:#ffa33a;"></div>
<div class="b" style="left:396.55px;top:512.75px;width:12.099999999999966px;height:31.149999999999977px;background:#039be5;"></div>
<div class="b" style="left:421.51px;top:443.1px;width:12.100000000000023px;height:5.5499999999999545px;background:#4dd0e1;"></div>
<div class="b" style="left:421.51px;top:449.55px;width:12.100000000000023px;height:32.5px;background:#81c784;"></div>
<div class="b" style="left:421.51px;top:482.95px;width:12.100000000000023px;height:19.80000000000001px;background:#5c6bc0;"></div>
<div class="b" style="left:421.51px;top:503.65px;width:12.100000000000023px;height:5.2000000000000455px;background:#ffa33a;"></div>
<div class="b" style="left:421.51px;top:509.75px;width:12.100000000000023px;height:34.14999999999998px;background:#039be5;"></div>
<div class="b" style="left:446.47px;top:453.9px;width:12.099999999999966px;height:9.850000000000023px;background:#4dd0e1;"></div>
<div class="b" style="left:446.47px;top:464.65px;width:12.099999999999966px;height:8.200000000000045px;background:#81c784;"></div>
<div class="b" style="left:446.47px;top:473.75px;width:12.099999999999966px;height:14.699999999999989px;background:#5c6bc0;"></div>
<div class="b" style="left:446.47px;top:489.35px;width:12.099999999999966px;height:9.5px;background:#ffa33a;"></div>
<div class="b" style="left:446.47px;top:499.75px;width:12.099999999999966px;height:44.14999999999998px;background:#039be5;"></div>
<div class="b" style="left:471.43px;top:443.9px;width:12.099999999999966px;height:20.25px;background:#4dd0e1;"></div>
<div class="b" style="left:471.43px;top:465.05px;width:12.099999999999966px;height:4.599999999999966px;background:#81c784;"></div>
<div class="b" style="left:471.43px;top:470.55px;width:12.099999999999966px;height:8.0px;background:#5c6bc0;"></div>
<div class="b" style="left:471.43px;top:479.45px;width:12.099999999999966px;height:5.5px;background:#ffa33a;"></div>
<div class="b" style="left:471.43px;top:485.85px;width:12.099999999999966px;height:58.049999999999955px;background:#039be5;"></div>
<div class="b" style="left:496.39px;top:457.1px;width:12.100000000000023px;height:6.649999999999977px;background:#4dd0e1;"></div>
<div class="b" style="left:496.39px;top:464.65px;width:12.100000000000023px;height:19.5px;background:#81c784;"></div>
<div class="b" style="left:496.39px;top:485.05px;width:12.100000000000023px;height:5.800000000000011px;background:#5c6bc0;"></div>
<div class="b" style="left:496.39px;top:491.75px;width:12.100000000000023px;height:16.100000000000023px;background:#ffa33a;"></div>
<div class="b" style="left:496.39px;top:508.75px;width:12.100000000000023px;height:35.14999999999998px;background:#039be5;"></div>
<div class="b" style="left:521.35px;top:444.0px;width:12.100000000000023px;height:5.649999999999977px;background:#4dd0e1;"></div>
<div class="b" style="left:521.35px;top:450.55px;width:12.100000000000023px;height:6.099999999999966px;background:#81c784;"></div>
<div class="b" style="left:521.35px;top:457.55px;width:12.100000000000023px;height:20.099999999999966px;background:#5c6bc0;"></div>
<div class="b" style="left:521.35px;top:478.55px;width:12.100000000000023px;height:4.300000000000011px;background:#ffa33a;"></div>
<div class="b" style="left:521.35px;top:483.75px;width:12.100000000000023px;height:60.14999999999998px;background:#039be5;"></div>
<div class="b" style="left:546.31px;top:455.0px;width:12.100000000000023px;height:9.550000000000011px;background:#4dd0e1;"></div>
<div class="b" style="left:546.31px;top:465.45px;width:12.100000000000023px;height:19.5px;background:#81c784;"></div>
<div class="b" style="left:546.31px;top:485.85px;width:12.100000000000023px;height:2.8999999999999773px;background:#5c6bc0;"></div>
<div class="b" style="left:546.31px;top:489.65px;width:12.100000000000023px;height:9.200000000000045px;background:#ffa33a;"></div>
<div class="b" style="left:546.31px;top:499.75px;width:12.100000000000023px;height:44.14999999999998px;background:#039be5;"></div>
<div class="b" style="left:571.27px;top:461.0px;width:12.100000000000023px;height:2.9499999999999886px;background:#4dd0e1;"></div>
<div class="b" style="left:571.27px;top:464.85px;width:12.100000000000023px;height:8.5px;background:#81c784;"></div>
<div class="b" style="left:571.27px;top:474.25px;width:12.100000000000023px;height:3.3999999999999773px;background:#5c6bc0;"></div>
<div class="b" style="left:571.27px;top:478.55px;width:12.100000000000023px;height:14.699999999999989px;background:#ffa33a;"></div>
<div class="b" style="left:571.27px;top:494.15px;width:12.100000000000023px;height:49.75px;background:#039be5;"></div>
<div class="b" style="left:596.23px;top:446.7px;width:12.100000000000023px;height:17.05000000000001px;background:#4dd0e1;"></div>
<div class="b" style="left:596.23px;top:464.65px;width:12.100000000000023px;height:18.200000000000045px;background:#81c784;"></div>
<div class="b" style="left:596.23px;top:483.75px;width:12.100000000000023px;height:23.80000000000001px;background:#5c6bc0;"></div>
<div class="b" style="left:596.23px;top:508.45px;width:12.100000000000023px;height:14.300000000000011px;background:#ffa33a;"></div>
<div class="b" style="left:596.23px;top:523.65px;width:12.100000000000023px;height:20.25px;background:#039be5;"></div>
<div class="b" style="left:621.19px;top:443.1px;width:12.099999999999909px;height:5.25px;background:#4dd0e1;"></div>
<div class="b" style="left:621.19px;top:449.25px;width:12.099999999999909px;height:34.80000000000001px;background:#81c784;"></div>
<div class="b" style="left:621.19px;top:484.95px;width:12.099999999999909px;height:18.600000000000023px;background:#5c6bc0;"></div>
<div class="b" style="left:621.19px;top:504.45px;width:12.099999999999909px;height:4.199999999999989px;background:#ffa33a;"></div>
<div class="b" style="left:621.19px;top:509.55px;width:12.099999999999909px;height:34.349999999999966px;background:#039be5;"></div>
<div class="b" style="left:646.15px;top:449.6px;width:12.100000000000023px;height:4.349999999999966px;background:#4dd0e1;"></div>
<div class="b" style="left:646.15px;top:454.85px;width:12.100000000000023px;height:15.799999999999955px;background:#81c784;"></div>
<div class="b" style="left:646.15px;top:471.55px;width:12.100000000000023px;height:18.80000000000001px;background:#5c6bc0;"></div>
<div class="b" style="left:646.15px;top:491.25px;width:12.100000000000023px;height:9.600000000000023px;background:#ffa33a;"></div>
<div class="b" style="left:646.15px;top:501.75px;width:12.100000000000023px;height:42.14999999999998px;background:#039be5;"></div>
<div class="b" style="left:671.11px;top:443.9px;width:12.100000000000023px;height:19.850000000000023px;background:#4dd0e1;"></div>
<div class="b" style="left:671.11px;top:464.65px;width:12.100000000000023px;height:9.200000000000045px;background:#81c784;"></div>
<div class="b" style="left:671.11px;top:474.75px;width:12.100000000000023px;height:29.19999999999999px;background:#5c6bc0;"></div>
<div class="b" style="left:671.11px;top:504.85px;width:12.100000000000023px;height:19.0px;background:#ffa33a;"></div>
<div class="b" style="left:671.11px;top:524.75px;width:12.100000000000023px;height:19.149999999999977px;background:#039be5;"></div>
<div class="b" style="left:390.0px;top:544px;width:1.0px;height:4px;background:#dcdcdc;"></div>
<div class="b" style="left:414.96px;top:544px;width:1.0px;height:4px;background:#dcdcdc;"></div>
<div class="b" style="left:439.92px;top:544px;width:1.0px;height:4px;background:#dcdcdc;"></div>
<div class="b" style="left:464.88px;top:544px;width:1.0px;height:4px;background:#dcdcdc;"></div>
<div class="b" style="left:489.84000000000003px;top:544px;width:1.0px;height:4px;background:#dcdcdc;"></div>
<div class="b" style="left:514.8px;top:544px;width:1.0px;height:4px;background:#dcdcdc;"></div>
<div class="b" style="left:539.76px;top:544px;width:1.0px;height:4px;background:#dcdcdc;"></div>
<div class="b" style="left:564.72px;top:544px;width:1.0px;height:4px;background:#dcdcdc;"></div>
<div class="b" style="left:589.6800000000001px;top:544px;width:1.0px;height:4px;background:#dcdcdc;"></div>
<div class="b" style="left:614.64px;top:544px;width:1.0px;height:4px;background:#dcdcdc;"></div>
<div class="b" style="left:639.6px;top:544px;width:1.0px;height:4px;background:#dcdcdc;"></div>
<div class="b" style="left:664.56px;top:544px;width:1.0px;height:4px;background:#dcdcdc;"></div>
<div class="b" style="left:689.52px;top:544px;width:1.0px;height:4px;background:#dcdcdc;"></div>
<div class="t" style="left:402.6px;transform:translateX(-50%);top:540.00px;font-size:5.95px;color:#777;font-weight:400;line-height:20px;">Nov</div>
<div class="t" style="left:427.56px;transform:translateX(-50%);top:540.00px;font-size:5.95px;color:#777;font-weight:400;line-height:20px;">Dec</div>
<div class="t" style="left:452.52000000000004px;transform:translateX(-50%);top:540.00px;font-size:5.95px;color:#777;font-weight:400;line-height:20px;">Jan</div>
<div class="t" style="left:477.48px;transform:translateX(-50%);top:540.00px;font-size:5.95px;color:#777;font-weight:400;line-height:20px;">Feb</div>
<div class="t" style="left:502.44000000000005px;transform:translateX(-50%);top:540.00px;font-size:5.95px;color:#777;font-weight:400;line-height:20px;">Mar</div>
<div class="t" style="left:527.4000000000001px;transform:translateX(-50%);top:540.00px;font-size:5.95px;color:#777;font-weight:400;line-height:20px;">Apr</div>
<div class="t" style="left:552.36px;transform:translateX(-50%);top:540.00px;font-size:5.95px;color:#777;font-weight:400;line-height:20px;">May</div>
<div class="t" style="left:577.32px;transform:translateX(-50%);top:540.00px;font-size:5.95px;color:#777;font-weight:400;line-height:20px;">Jun</div>
<div class="t" style="left:602.28px;transform:translateX(-50%);top:540.00px;font-size:5.95px;color:#777;font-weight:400;line-height:20px;">July</div>
<div class="t" style="left:627.24px;transform:translateX(-50%);top:540.00px;font-size:5.95px;color:#777;font-weight:400;line-height:20px;">Aug</div>
<div class="t" style="left:652.2px;transform:translateX(-50%);top:540.00px;font-size:5.95px;color:#777;font-weight:400;line-height:20px;">Sep</div>
<div class="t" style="left:677.1600000000001px;transform:translateX(-50%);top:540.00px;font-size:5.95px;color:#777;font-weight:400;line-height:20px;">Oct</div>
<div class="t" style="left:452.52000000000004px;transform:translateX(-50%);top:547.10px;font-size:5.95px;color:#777;font-weight:400;line-height:20px;">2019</div>
<div class="b" style="left:391.2px;top:566.5px;width:4px;height:4px;border-radius:50%;background:#039be5"></div>
<div class="t" style="left:397px;top:558.40px;font-size:5.95px;color:#333;font-weight:400;line-height:20px;">Reputation</div>
<div class="b" style="left:432px;top:566.5px;width:4px;height:4px;border-radius:50%;background:#ffa33a"></div>
<div class="t" style="left:438.5px;top:558.40px;font-size:5.95px;color:#333;font-weight:400;line-height:20px;">Threats</div>
<div class="b" style="left:466.9px;top:566.5px;width:4px;height:4px;border-radius:50%;background:#5c6bc0"></div>
<div class="t" style="left:472.9px;top:558.40px;font-size:5.95px;color:#333;font-weight:400;line-height:20px;">Spam</div>
<div class="b" style="left:496.2px;top:566.5px;width:4px;height:4px;border-radius:50%;background:#81c784"></div>
<div class="t" style="left:502.7px;top:558.40px;font-size:5.95px;color:#333;font-weight:400;line-height:20px;">Bulk</div>
<div class="b" style="left:522.4px;top:566.5px;width:4px;height:4px;border-radius:50%;background:#4dd0e1"></div>
<div class="t" style="left:528.6px;top:558.40px;font-size:5.95px;color:#333;font-weight:400;line-height:20px;">Other</div>
<div class="b" style="left:37px;top:588px;width:335px;height:212px;border:1px solid #e2e2e2;box-shadow:0 0 1px rgba(0,0,0,0.06);background:#fff"></div>
<div class="t" style="left:49.5px;top:593.70px;font-size:10.05px;color:#212121;font-weight:400;line-height:20px;-webkit-text-stroke:0.28px #212121">Attachment Types</div>
<svg style="left:354.5px;top:598.0px" width="7.3" height="8.8" viewBox="0 0 7.3 8.8" preserveAspectRatio="none"><path fill="#5a5a5a" d="M2.5 0 H4.8 V2.9 H7.1 L3.65 6.2 L0.2 2.9 H2.5 Z M0 7.7 H7.3 V8.8 H0 Z"/></svg>
<div class="t" style="left:53.3px;top:613.40px;font-size:5.95px;color:#757575;font-weight:400;line-height:20px;">Attachment Type</div>
<div class="t" style="right:555.2px;top:613.40px;font-size:5.95px;color:#757575;font-weight:400;line-height:20px;">Messages</div>
<div class="t" style="right:369.2px;top:613.30px;font-size:5.95px;color:#757575;font-weight:400;line-height:20px;">Total Size</div>
<div class="b" style="left:49px;top:631px;width:310.6px;height:1px;background:#e8e8e8;"></div>
<div class="t" style="left:53.3px;top:631.00px;font-size:6.45px;color:#212121;font-weight:400;line-height:20px;">txt</div>
<div class="t" style="right:555.2px;top:631.00px;font-size:6.45px;color:#212121;font-weight:400;line-height:20px;">107,669</div>
<div class="t" style="right:369.2px;top:631.00px;font-size:6.45px;color:#212121;font-weight:400;line-height:20px;">98880.9</div>
<div class="b" style="left:176.7px;top:638.6px;width:136.40000000000003px;height:4.199999999999932px;background:#0ba0e9;"></div>
<div class="b" style="left:49px;top:648px;width:310.6px;height:1px;background:#e8e8e8;"></div>
<div class="t" style="left:53.3px;top:647.70px;font-size:6.45px;color:#212121;font-weight:400;line-height:20px;">html</div>
<div class="t" style="right:555.2px;top:647.70px;font-size:6.45px;color:#212121;font-weight:400;line-height:20px;">62,546</div>
<div class="t" style="right:369.2px;top:647.70px;font-size:6.45px;color:#212121;font-weight:400;line-height:20px;">247417.8</div>
<div class="b" style="left:176.7px;top:655.3px;width:92.30000000000001px;height:4.2000000000000455px;background:#0ba0e9;"></div>
<div class="b" style="left:49px;top:664px;width:310.6px;height:1px;background:#e8e8e8;"></div>
<div class="t" style="left:53.3px;top:664.25px;font-size:6.45px;color:#212121;font-weight:400;line-height:20px;">message/delivery-status</div>
<div class="t" style="right:555.2px;top:664.25px;font-size:6.45px;color:#212121;font-weight:400;line-height:20px;">40,173</div>
<div class="t" style="right:369.2px;top:664.25px;font-size:6.45px;color:#212121;font-weight:400;line-height:20px;">15543.9</div>
<div class="b" style="left:176.7px;top:671.85px;width:56.60000000000002px;height:4.199999999999932px;background:#0ba0e9;"></div>
<div class="b" style="left:49px;top:681px;width:310.6px;height:1px;background:#e8e8e8;"></div>
<div class="t" style="left:53.3px;top:680.65px;font-size:6.45px;color:#212121;font-weight:400;line-height:20px;">text/rfc822-headers</div>
<div class="t" style="right:555.2px;top:680.65px;font-size:6.45px;color:#212121;font-weight:400;line-height:20px;">812</div>
<div class="t" style="right:369.2px;top:680.65px;font-size:6.45px;color:#212121;font-weight:400;line-height:20px;">2301.9</div>
<div class="b" style="left:176.7px;top:688.25px;width:3.4000000000000057px;height:4.2000000000000455px;background:#0ba0e9;"></div>
<div class="b" style="left:49px;top:697px;width:310.6px;height:1px;background:#e8e8e8;"></div>
<div class="t" style="left:53.3px;top:697.05px;font-size:6.45px;color:#212121;font-weight:400;line-height:20px;">pdf</div>
<div class="t" style="right:555.2px;top:697.05px;font-size:6.45px;color:#212121;font-weight:400;line-height:20px;">614</div>
<div class="t" style="right:369.2px;top:697.05px;font-size:6.45px;color:#212121;font-weight:400;line-height:20px;">146288.8</div>
<div class="b" style="left:176.7px;top:704.65px;width:3.4000000000000057px;height:4.2000000000000455px;background:#0ba0e9;"></div>
<div class="b" style="left:49px;top:714px;width:310.6px;height:1px;background:#e8e8e8;"></div>
<div class="t" style="left:53.3px;top:713.75px;font-size:6.45px;color:#212121;font-weight:400;line-height:20px;">doc</div>
<div class="t" style="right:555.2px;top:713.75px;font-size:6.45px;color:#212121;font-weight:400;line-height:20px;">490</div>
<div class="t" style="right:369.2px;top:713.75px;font-size:6.45px;color:#212121;font-weight:400;line-height:20px;">140260.2</div>
<div class="b" style="left:176.7px;top:721.35px;width:1.9000000000000057px;height:4.199999999999932px;background:#0ba0e9;"></div>
<div class="b" style="left:49px;top:731px;width:310.6px;height:1px;background:#e8e8e8;"></div>
<div class="t" style="left:53.3px;top:730.20px;font-size:6.45px;color:#212121;font-weight:400;line-height:20px;">p7m</div>
<div class="t" style="right:555.2px;top:730.20px;font-size:6.45px;color:#212121;font-weight:400;line-height:20px;">404</div>
<div class="t" style="right:369.2px;top:730.20px;font-size:6.45px;color:#212121;font-weight:400;line-height:20px;">2823.2</div>
<div class="b" style="left:176.7px;top:737.8px;width:1.9000000000000057px;height:4.2000000000000455px;background:#0ba0e9;"></div>
<div class="b" style="left:49px;top:747px;width:310.6px;height:1px;background:#e8e8e8;"></div>
<div class="b" style="left:357px;top:631.2px;width:3.6999999999999886px;height:42.299999999999955px;background:rgba(0,0,0,0.13);border-radius:1.85px"></div></div></body></html>
